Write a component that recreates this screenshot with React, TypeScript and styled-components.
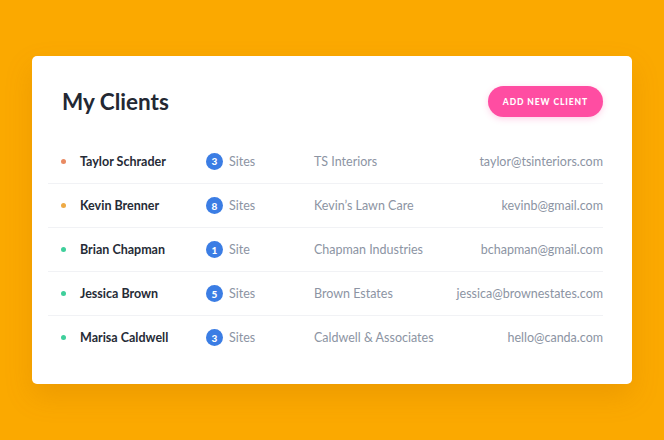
import styled, { createGlobalStyle } from "styled-components";

const GlobalStyle = createGlobalStyle`
  html, body {
    margin: 0;
    padding: 0;
    background: #fba900;
  }
  body {
    font-family: Lato, "Open Sans", sans-serif;
    -webkit-font-smoothing: antialiased;
  }
`;

type Status = "late" | "pending" | "active";

type Client = {
  name: string;
  sites: number;
  company: string;
  email: string;
  status: Status;
};

const clients: Client[] = [
  { name: "Taylor Schrader", sites: 3, company: "TS Interiors", email: "taylor@tsinteriors.com", status: "late" },
  { name: "Kevin Brenner", sites: 8, company: "Kevin’s Lawn Care", email: "kevinb@gmail.com", status: "pending" },
  { name: "Brian Chapman", sites: 1, company: "Chapman Industries", email: "bchapman@gmail.com", status: "active" },
  { name: "Jessica Brown", sites: 5, company: "Brown Estates", email: "jessica@brownestates.com", status: "active" },
  { name: "Marisa Caldwell", sites: 3, company: "Caldwell & Associates", email: "hello@canda.com", status: "active" },
];

const statusColors: Record<Status, string> = {
  late: "#e98a62",
  pending: "#eeaa45",
  active: "#3fcf9b",
};

const App = () => {
  return (
    <Page>
      <GlobalStyle />
      <Card>
        <Header>
          <Title>My Clients</Title>
          <AddButton>Add New Client</AddButton>
        </Header>
        <List>
          {clients.map((c) => (
            <Row key={c.name}>
              <DotCell>
                <Dot $color={statusColors[c.status]} />
              </DotCell>
              <Name>{c.name}</Name>
              <Sites>
                <Badge>{c.sites}</Badge>
                {c.sites === 1 ? "Site" : "Sites"}
              </Sites>
              <Muted>{c.company}</Muted>
              <Email>{c.email}</Email>
            </Row>
          ))}
        </List>
      </Card>
    </Page>
  );
};

const Page = styled.div`
  width: 664px;
  height: 440px;
  padding: 56px 32px 0;
  box-sizing: border-box;
`;

const Card = styled.div`
  width: 600px;
  height: 328px;
  box-sizing: border-box;
  background: #ffffff;
  border-radius: 5px;
  padding: 30px 29px 0 16px;
  box-shadow: 0 12px 28px rgba(170, 90, 0, 0.18);
`;

const Header = styled.div`
  display: flex;
  align-items: center;
  justify-content: space-between;
  padding-left: 14px;
  height: 31px;
`;

const Title = styled.h1`
  margin: 0;
  font-size: 22.5px;
  font-weight: 700;
  color: #232833;
`;

const AddButton = styled.button`
  height: 31px;
  padding: 0 15px;
  border: none;
  border-radius: 16px;
  background: #ff4da2;
  color: #ffffff;
  font-family: inherit;
  font-size: 8.5px;
  font-weight: 900;
  letter-spacing: 0.9px;
  text-transform: uppercase;
  box-shadow: 0 2px 6px rgba(255, 77, 162, 0.25);
`;

const List = styled.div`
  margin-top: 22px;
`;

const Row = styled.div`
  display: grid;
  grid-template-columns: 32px 126px 108px 1fr auto;
  align-items: center;
  height: 44px;
  box-sizing: border-box;
  font-size: 12.5px;
  & + & {
    border-top: 1px solid #f1f2f5;
  }
`;

const DotCell = styled.div`
  display: flex;
  padding-left: 13px;
`;

const Dot = styled.span<{ $color: string }>`
  width: 5px;
  height: 5px;
  border-radius: 50%;
  background: ${(p) => p.$color};
`;

const Name = styled.span`
  font-weight: 700;
  color: #262b36;
`;

const Muted = styled.span`
  color: #8c94a3;
`;

const Sites = styled(Muted)`
  display: flex;
  align-items: center;
  gap: 6px;
`;

const Badge = styled.span`
  width: 17px;
  height: 17px;
  border-radius: 50%;
  background: #3b7de4;
  color: #ffffff;
  font-size: 10px;
  font-weight: 900;
  display: flex;
  align-items: center;
  justify-content: center;
`;

const Email = styled(Muted)`
  text-align: right;
`;

export default App;
